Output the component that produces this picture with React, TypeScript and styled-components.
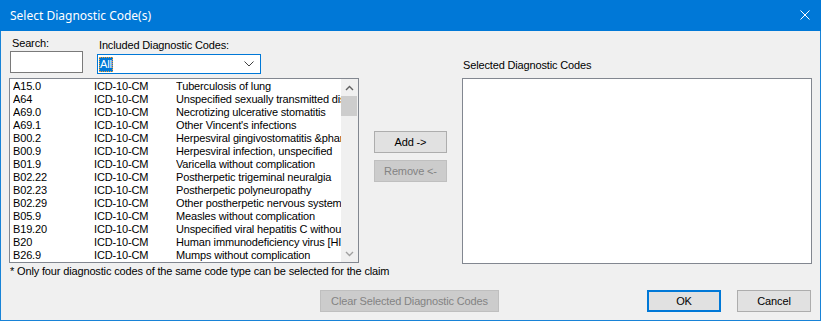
import styled, { createGlobalStyle } from "styled-components"

interface DiagCode {
  code: string
  type: string
  description: string
}

const codes: DiagCode[] = [
  { code: "A15.0", type: "ICD-10-CM", description: "Tuberculosis of lung" },
  { code: "A64", type: "ICD-10-CM", description: "Unspecified sexually transmitted disease" },
  { code: "A69.0", type: "ICD-10-CM", description: "Necrotizing ulcerative stomatitis" },
  { code: "A69.1", type: "ICD-10-CM", description: "Other Vincent's infections" },
  { code: "B00.2", type: "ICD-10-CM", description: "Herpesviral gingivostomatitis &pharyngotonsillitis" },
  { code: "B00.9", type: "ICD-10-CM", description: "Herpesviral infection, unspecified" },
  { code: "B01.9", type: "ICD-10-CM", description: "Varicella without complication" },
  { code: "B02.22", type: "ICD-10-CM", description: "Postherpetic trigeminal neuralgia" },
  { code: "B02.23", type: "ICD-10-CM", description: "Postherpetic polyneuropathy" },
  { code: "B02.29", type: "ICD-10-CM", description: "Other postherpetic nervous system involvement" },
  { code: "B05.9", type: "ICD-10-CM", description: "Measles without complication" },
  { code: "B19.20", type: "ICD-10-CM", description: "Unspecified viral hepatitis C without hepatic coma" },
  { code: "B20", type: "ICD-10-CM", description: "Human immunodeficiency virus [HIV] disease" },
  { code: "B26.9", type: "ICD-10-CM", description: "Mumps without complication" },
]

const GlobalStyle = createGlobalStyle`
  body {
    margin: 0;
    background: #ffffff;
    font-family: "Liberation Sans", Arial, sans-serif;
    font-size: 11px;
    color: #000000;
  }
`

const Window = styled.div`
  width: 821px;
  height: 321px;
  box-sizing: border-box;
  border: 1px solid #1883d7;
  border-top: none;
  background: #f0f0f0;
  display: flex;
  flex-direction: column;
`

const TitleBar = styled.div`
  height: 31px;
  margin: 0 -1px;
  background: #0078d7;
  color: #ffffff;
  display: flex;
  align-items: center;
  justify-content: space-between;
  padding: 0 10px 1px 10px;
  box-sizing: border-box;
  font-family: "Noto Sans", "Open Sans", sans-serif;
  font-size: 12px;
`

const CloseIcon = styled.svg`
  width: 10px;
  height: 10px;
  margin-right: 1px;
`

const Body = styled.div`
  padding: 0 8px;
  letter-spacing: -0.15px;
`

const MainRow = styled.div`
  display: flex;
  align-items: flex-start;
`

const LeftColumn = styled.div`
  width: 350px;
  display: flex;
  flex-direction: column;
`

const FilterRow = styled.div`
  height: 47px;
  display: flex;
  align-items: flex-start;
`

const Field = styled.div<{ $top: number; $left: number; $gap: number }>`
  display: flex;
  flex-direction: column;
  padding-top: ${(p) => p.$top}px;
  margin-left: ${(p) => p.$left}px;
  gap: ${(p) => p.$gap}px;
`

const Label = styled.div<{ $indent?: number }>`
  line-height: 13px;
  padding-left: ${(p) => p.$indent ?? 0}px;
  white-space: nowrap;
`

const TextBox = styled.div`
  width: 73px;
  height: 22px;
  box-sizing: border-box;
  background: #ffffff;
  border: 1px solid #7a7a7a;
`

const Combo = styled.div`
  width: 164px;
  height: 20px;
  box-sizing: border-box;
  background: #ffffff;
  border: 1px solid #0078d7;
  display: flex;
  align-items: center;
  justify-content: space-between;
  padding: 0 6px 0 1px;
`

const ComboValue = styled.span`
  background: #0078d7;
  color: #ffffff;
  line-height: 15px;
  padding: 0 1px;
  outline: 1px dotted #f0a030;
  outline-offset: -1px;
`

const ListBox = styled.div<{ $height: number }>`
  height: ${(p) => p.$height}px;
  box-sizing: border-box;
  background: #ffffff;
  border: 1px solid #828790;
  display: flex;
`

const ListRows = styled.div`
  flex: 1;
  min-width: 0;
  padding-top: 1px;
  overflow: hidden;
`

const Row = styled.div`
  display: grid;
  grid-template-columns: 81px 82px 1fr;
  padding-left: 3px;
  height: 13px;
  line-height: 13px;
  white-space: nowrap;
`

const Cell = styled.span`
  overflow: hidden;
`

const ScrollBar = styled.div`
  width: 17px;
  background: #f0f0f0;
  display: flex;
  flex-direction: column;
`

const ScrollArrow = styled.div`
  height: 17px;
  display: flex;
  align-items: center;
  justify-content: center;
`

const ScrollThumb = styled.div`
  height: 20px;
  margin: 0 1px 0 0;
  background: #cdcdcd;
`

const ScrollTrack = styled.div`
  flex: 1;
`

const MiddleColumn = styled.div`
  width: 73px;
  margin-left: 15px;
  padding-top: 100px;
  display: flex;
  flex-direction: column;
  gap: 7px;
`

const Button = styled.div<{ $width: number; $disabled?: boolean; $default?: boolean }>`
  width: ${(p) => p.$width}px;
  height: 22px;
  box-sizing: border-box;
  display: flex;
  align-items: center;
  justify-content: center;
  background: ${(p) => (p.$disabled ? "#cccccc" : "#e1e1e1")};
  border: ${(p) => (p.$default ? "2px solid #0078d7" : `1px solid ${p.$disabled ? "#bfbfbf" : "#adadad"}`)};
  color: ${(p) => (p.$disabled ? "#838383" : "#000000")};
  white-space: nowrap;
`

const RightColumn = styled.div`
  width: 350px;
  margin-left: 15px;
  display: flex;
  flex-direction: column;
`

const RightLabel = styled.div`
  height: 47px;
  box-sizing: border-box;
  padding: 28px 0 0 1px;
  line-height: 13px;
`

const Note = styled.div`
  line-height: 13px;
  margin-top: 1px;
  padding-left: 1px;
`

const ButtonRow = styled.div`
  display: flex;
  margin-top: 12px;
`

const Spacer = styled.div<{ $w: number }>`
  width: ${(p) => p.$w}px;
  flex-shrink: 0;
`

const Chevron = ({ up }: { up?: boolean }) => (
  <svg width="9" height="6" viewBox="0 0 9 6">
    <polyline
      points={up ? "1,5 4.5,1.5 8,5" : "1,1 4.5,4.5 8,1"}
      fill="none"
      stroke={up ? "#606060" : "#a0a0a0"}
      strokeWidth="1.4"
    />
  </svg>
)

const App = () => (
  <>
    <GlobalStyle />
    <Window>
      <TitleBar>
        <span>Select Diagnostic Code(s)</span>
        <CloseIcon viewBox="0 0 10 10">
          <path d="M0.5 0.5 L9.5 9.5 M9.5 0.5 L0.5 9.5" stroke="#ffffff" strokeWidth="1" />
        </CloseIcon>
      </TitleBar>
      <Body>
        <MainRow>
          <LeftColumn>
            <FilterRow>
              <Field $top={6} $left={1} $gap={1}>
                <Label $indent={2}>Search:</Label>
                <TextBox />
              </Field>
              <Field $top={8} $left={14} $gap={2}>
                <Label $indent={2}>Included Diagnostic Codes:</Label>
                <Combo>
                  <ComboValue>All</ComboValue>
                  <svg width="10" height="6" viewBox="0 0 10 6">
                    <polyline points="0.5,0.5 5,5 9.5,0.5" fill="none" stroke="#404040" strokeWidth="1" />
                  </svg>
                </Combo>
              </Field>
            </FilterRow>
            <ListBox $height={185}>
              <ListRows>
                {codes.map((c) => (
                  <Row key={c.code}>
                    <Cell>{c.code}</Cell>
                    <Cell>{c.type}</Cell>
                    <Cell>{c.description}</Cell>
                  </Row>
                ))}
              </ListRows>
              <ScrollBar>
                <ScrollArrow>
                  <Chevron up />
                </ScrollArrow>
                <ScrollThumb />
                <ScrollTrack />
                <ScrollArrow>
                  <Chevron />
                </ScrollArrow>
              </ScrollBar>
            </ListBox>
          </LeftColumn>
          <MiddleColumn>
            <Button $width={73}>Add -&gt;</Button>
            <Button $width={73} $disabled>
              Remove &lt;-
            </Button>
          </MiddleColumn>
          <RightColumn>
            <RightLabel>Selected Diagnostic Codes</RightLabel>
            <ListBox $height={186} />
          </RightColumn>
        </MainRow>
        <Note>* Only four diagnostic codes of the same code type can be selected for the claim</Note>
        <ButtonRow>
          <Spacer $w={311} />
          <Button $width={179} $disabled>
            Clear Selected Diagnostic Codes
          </Button>
          <Spacer $w={148} />
          <Button $width={74} $default>
            OK
          </Button>
          <Spacer $w={16} />
          <Button $width={74}>Cancel</Button>
        </ButtonRow>
      </Body>
    </Window>
  </>
)

export default App
